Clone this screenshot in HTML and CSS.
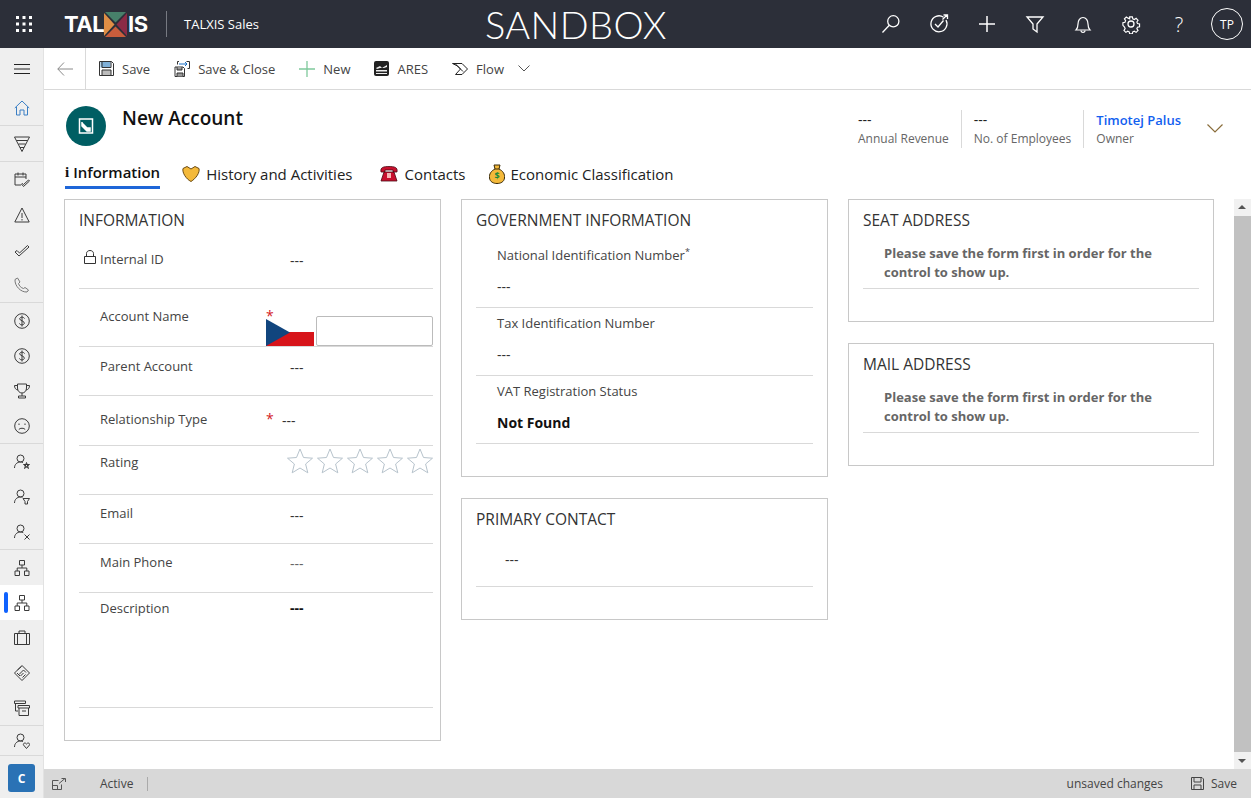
FILE: index.html
```html
<!DOCTYPE html>
<html lang="en">
<head>
    <meta charset="UTF-8">
    <title>New Account - TALXIS Sales</title>
    <link rel="stylesheet" href="styles.css">
</head>
<body>
    <!-- Top bar -->
    <header class="topbar">
        <button class="waffle" aria-label="Apps">
            <svg width="16" height="16" viewBox="0 0 16 16" fill="#fff"><rect x="0" y="0" width="3" height="3"/><rect x="6.5" y="0" width="3" height="3"/><rect x="13" y="0" width="3" height="3"/><rect x="0" y="6.5" width="3" height="3"/><rect x="6.5" y="6.5" width="3" height="3"/><rect x="13" y="6.5" width="3" height="3"/><rect x="0" y="13" width="3" height="3"/><rect x="6.5" y="13" width="3" height="3"/><rect x="13" y="13" width="3" height="3"/></svg>
        </button>
        <div class="logo">
            <span>TAL</span>
            <svg width="23" height="25" viewBox="0 0 23 25"><polygon points="1,0 22,0 11.5,10.5" fill="#47806a"/><polygon points="0,1 0,24 10.5,12.5" fill="#e08e45"/><polygon points="1,25 22,25 11.5,14.5" fill="#c85d3c"/><polygon points="23,1 23,24 12.5,12.5" fill="#8b2b46"/></svg>
            <span>IS</span>
        </div>
        <div class="app-name">TALXIS Sales</div>
        <div class="env">SANDBOX</div>
        <nav class="top-icons">
            <a><svg width="20" height="20" viewBox="0 0 20 20" fill="none" stroke="#fff" stroke-width="1.3"><circle cx="12.3" cy="7.3" r="5.6"/><path d="M8.3 11.3 1.5 18.5"/></svg></a>
            <a><svg width="20" height="20" viewBox="0 0 20 20" fill="none" stroke="#fff" stroke-width="1.3"><path d="M14.5 3.2A8 8 0 1 0 17 6"/><path d="M6 10l3 3 5.500-6.500"/><path d="M13.500 5.500 18 1M14.500 1H18.500V5"/></svg></a>
            <a><svg width="20" height="20" viewBox="0 0 20 20" fill="none" stroke="#fff" stroke-width="1.500"><path d="M10 2v16M2 10h16"/></svg></a>
            <a><svg width="20" height="20" viewBox="0 0 20 20" fill="none" stroke="#fff" stroke-width="1.300"><path d="M2 3h16l-6 7v8l-4-3v-5z"/></svg></a>
            <a><svg width="20" height="20" viewBox="0 0 20 20" fill="none" stroke="#fff" stroke-width="1.200"><path d="M3 16c1.500-1.500 2-3 2-6 0-3.500 2-6.500 5-6.500s5 3 5 6.500c0 3 .5 4.500 2 6z"/><path d="M8 16.500c0 2.500 4 2.500 4 0"/></svg></a>
            <a><svg width="20" height="20" viewBox="0 0 20 20" fill="none" stroke="#fff" stroke-width="1.300"><circle cx="10" cy="10" r="3"/><path d="M8.500 2h3l.5 2.300 1.700.7 2-1.300 2.100 2.100-1.300 2 .7 1.700 2.300.5v3l-2.300.5-.7 1.700 1.300 2-2.100 2.100-2-1.300-1.700.7-.5 2.300h-3l-.5-2.300-1.700-.7-2 1.300-2.100-2.100 1.300-2-.7-1.700L1 11.500v-3l2.300-.5.7-1.700-1.300-2 2.100-2.100 2 1.300L8.500 4.300z" transform="translate(1 1) scale(.9)"/></svg></a>
            <a class="help">?</a>
        </nav>
        <div class="avatar">TP</div>
    </header>

    <div class="shell">
        <!-- Left navigation -->
        <aside class="sidenav">
            <div class="nav-toggle">
                <svg width="16" height="12" viewBox="0 0 16 12" stroke="#222" stroke-width="1"><path d="M0 1.500h16M0 6h16M0 10.500h16"/></svg>
            </div>
            <div class="nav-group">
                <a class="nav-item"><svg viewBox="0 0 16 16"><path d="M.8 8 8 1l7.200 7M2.500 7v8h3.500v-5h4v5h3.500V7" stroke="#3b7fc4"/></svg></a>
            </div>
            <div class="nav-group">
                <a class="nav-item"><svg viewBox="0 0 16 16"><path d="M.5 1h15L8 15.500zM2.500 4.500h11M4.500 8h7M6 11.500h4"/></svg></a>
            </div>
            <div class="nav-group">
                <a class="nav-item"><svg viewBox="0 0 16 16"><path d="M7 13H1V2h11v5M1 5h11M4 .5v3M9 .5v3M7.500 12l2 2.500 6-5.500-1-1-5 4.500-1-1z"/></svg></a>
                <a class="nav-item"><svg viewBox="0 0 16 16"><path d="M8 1 .8 15h14.400zM8 6v5M8 12v1.500"/></svg></a>
                <a class="nav-item"><svg viewBox="0 0 16 16"><path d="M1 10l4 4L15 5l-1.500-1.500L5.500 11 3 8.500z"/></svg></a>
                <a class="nav-item"><svg viewBox="0 0 16 16"><path d="M1 2.500 3.500 1 6 5 4.500 6.500c.5 2 2.500 4.500 5 5l1.500-1 3.500 2.500-1.500 2C7 15.500 .5 9 1 2.500z" stroke="#777"/></svg></a>
            </div>
            <div class="nav-group">
                <a class="nav-item"><svg viewBox="0 0 16 16"><circle cx="8" cy="8" r="7.300"/><path d="M10.500 5.500C10 4 6 3.500 5.700 5.700 5.500 8 10.500 7.500 10.300 10.200 10 12.500 6 12.300 5.500 10.500M8 2.500v11"/></svg></a>
                <a class="nav-item"><svg viewBox="0 0 16 16"><circle cx="8" cy="8" r="7.300"/><path d="M10.500 5.500C10 4 6 3.500 5.700 5.700 5.500 8 10.500 7.500 10.300 10.200 10 12.500 6 12.300 5.500 10.500M8 2.500v11"/></svg></a>
                <a class="nav-item"><svg viewBox="0 0 16 16"><path d="M3.500 1h9v4c0 3-2 5-4.500 5S3.500 8 3.500 5zM3.500 2.500H.5C.5 5 1.500 6.500 4 7M12.500 2.500h3c0 2.500-1 4-3.500 4.500M8 10v3M4.500 13h7v2h-7z"/></svg></a>
                <a class="nav-item"><svg viewBox="0 0 16 16"><circle cx="8" cy="8" r="7.300"/><path d="M4.800 11.500C6 9.800 10 9.800 11.200 11.500M5 5.500v1.500M11 5.500v1.500"/></svg></a>
            </div>
            <div class="nav-group">
                <a class="nav-item"><svg viewBox="0 0 16 16"><circle cx="6.500" cy="4.500" r="3.500"/><path d="M.5 14c0-3.500 2.500-6 6-6 1 0 1.500.2 2.500.5M9.500 10.500h6l-5 4 2-6 2 6z"/></svg></a>
                <a class="nav-item"><svg viewBox="0 0 16 16"><circle cx="6.500" cy="4.500" r="3.500"/><path d="M.5 14c0-3.500 2.500-6 6-6 .8 0 1.500.1 2 .3M9 9.500h6.500l-2 3v2.500h-2.500v-2.500z"/></svg></a>
                <a class="nav-item"><svg viewBox="0 0 16 16"><circle cx="6.500" cy="4.500" r="3.500"/><path d="M.5 14c0-3.500 2.500-6 6-6 1 0 2 .2 2.800.7M10.500 10.500l5 5M15.500 10.500l-5 5"/></svg></a>
            </div>
            <div class="nav-group">
                <a class="nav-item"><svg viewBox="0 0 16 16"><path d="M5.500.5h5v4.500h-5zM1 11h4.500v4.500H1zM10.500 11H15v4.500h-4.500zM8 5v3M3.200 11V8h9.600v3"/></svg></a>
                <a class="nav-item current"><svg viewBox="0 0 16 16"><path d="M5.500.5h5v4.500h-5zM1 11h4.500v4.500H1zM10.500 11H15v4.500h-4.500zM8 5v3M3.200 11V8h9.600v3"/></svg></a>
                <a class="nav-item"><svg viewBox="0 0 16 16"><path d="M.5 3.500h15v11H.5zM5 3.500V1h6v2.500M3.500 3.500v11M12.500 3.500v11"/></svg></a>
                <a class="nav-item"><svg viewBox="0 0 16 16"><path d="M8 .5 15.500 8 8 15.500.5 8zM3.500 5l4-3.500M5 9.500 9.500 5 12 7.500M6.500 11l3-3M8.500 12.500l3-3M3 8l3 3"/></svg></a>
                <a class="nav-item"><svg viewBox="0 0 16 16"><path d="M.5 1h11v2.500H.5zM1.500 3.500V11h2.500M4 5.500h11.500v2.500H4zM5 8v7.500h9.500V8M8 11h4"/></svg></a>
            </div>
            <div class="nav-group short">
                <a class="nav-item"><svg viewBox="0 0 16 16"><circle cx="6.500" cy="4.500" r="3.500"/><path d="M.5 14c0-3.500 2.500-6 6-6 1 0 2 .2 2.500.5M12.500 15.500 9.500 12c-.8-1.500 1.500-3 3-1 1.500-2 3.800-.5 3 1z"/></svg></a>
            </div>
            <div class="area-switch">C</div>
        </aside>

        <div class="workspace">
            <!-- Command bar -->
            <div class="commandbar">
                <button class="back" aria-label="Back">
                    <svg width="16" height="14" viewBox="0 0 16 14" fill="none" stroke="#8a8a8a"><path d="M7 .5.800 7 7 13.500M.800 7H16"/></svg>
                </button>
                <button class="cmd"><svg width="15" height="15" viewBox="0 0 15 15"><path d="M.5.500h12l2 2v12H.5z" fill="#fff" stroke="#333"/><path d="M1.500 1h10v5.500h-10z" fill="#7fb0d8"/><path d="M3 9h9v5.500H3z" fill="#bbb" stroke="#333"/><path d="M3 .5v6h9v-6" fill="none" stroke="#333"/></svg><span>Save</span></button>
                <button class="cmd"><svg width="16" height="16" viewBox="0 0 16 16" fill="none" stroke="#333"><path d="M1 6h8l1.500 1.500v8H1z"/><path d="M3 6v3h5V6M3 15.500v-3.500h6v3.500" fill="#999"/><path d="M5 .5H3.500v3M12.500.5H15.500v7h-2"/><path d="M5 3h8M11 1l2 2-2 2" stroke="#1a6fc4"/></svg><span>Save &amp; Close</span></button>
                <button class="cmd"><svg width="16" height="16" viewBox="0 0 16 16" stroke="#7fc99c" stroke-width="1.300"><path d="M8 0v16M0 8h16"/></svg><span>New</span></button>
                <button class="cmd"><svg width="15" height="15" viewBox="0 0 15 15"><rect width="15" height="15" rx="2" fill="#222"/><path d="M2 7l4-2 2 2 5-3v2l-3 1H6L3 8zM2 9h11v1.500H2zM2 12h11v1H2z" fill="#eee"/></svg><span>ARES</span></button>
                <button class="cmd"><svg width="16" height="14" viewBox="0 0 16 14" fill="none" stroke="#222"><path d="M.5 1.500H10L15.500 7 10 12.500H3.500L8.500 7 5.500 4zM3 1.500 11 9.500"/></svg><span>Flow</span></button>
                <button class="more" aria-label="More commands"><svg width="12" height="7" viewBox="0 0 12 7" fill="none" stroke="#555"><path d="M.5.500 6 6l5.500-5.500"/></svg></button>
            </div>

            <main class="record">
                <!-- Record header -->
                <div class="record-head">
                    <div class="entity-icon">
                        <svg width="16" height="16" viewBox="0 0 16 16" fill="none" stroke="#fff" stroke-width="1.500"><path d="M1.500 1H14.500V15H1.500z"/><path d="M4 4v4l5 5H12V10L9 10 4 5" fill="#fff"/></svg>
                    </div>
                    <h1>New Account</h1>
                    <div class="head-fields">
                        <div class="head-field"><b>---</b><span>Annual Revenue</span></div>
                        <div class="head-field"><b>---</b><span>No. of Employees</span></div>
                        <div class="head-field"><a>Timotej Palus</a><span>Owner</span></div>
                    </div>
                    <svg class="head-chevron" width="16" height="9" viewBox="0 0 16 9" fill="none" stroke="#8a6d3b" stroke-width="1.200"><path d="M.5.500 8 8l7.500-7.500"/></svg>
                </div>

                <!-- Tabs -->
                <div class="tabs">
                    <a class="tab active"><span class="tab-i">i</span>Information</a>
                    <a class="tab tab-history"><svg width="18" height="16" viewBox="0 0 18 16"><path d="M1 2.500 5 .5 9 3l4-2.500 4 2c1 4-3 10-8 13C4 13 0 6.500 1 2.500z" fill="#f4b93a" stroke="#6b4a10"/></svg>History and Activities</a>
                    <a class="tab tab-contacts"><svg width="18" height="16" viewBox="0 0 18 16"><path d="M1 6C0 1 4 .5 9 .5s9 .5 8 5.500h-4V4H5v2zM4 6h10l3 9H1z" fill="#c8102e" stroke="#4a0a14" stroke-width=".8"/><rect x="7" y="7" width="4" height="5" fill="#f6b6b6"/></svg>Contacts</a>
                    <a class="tab tab-economic"><svg width="16" height="20" viewBox="0 0 16 20"><path d="M5 1h6L10 5c4 2 6 5 5.500 9-.500 4-4 5.500-7.500 5.500S1 18 .500 14C0 10 2 7 6 5z" fill="#f4b93a" stroke="#3a2a08"/><path d="M6 5h4" stroke="#3a2a08"/><text x="8" y="15" font-size="9" font-weight="700" text-anchor="middle" fill="#1a8a3c">$</text></svg>Economic Classification</a>
                </div>

                <div class="form-scroll">
                    <div class="form">
                        <section class="card card-info">
                            <h2>INFORMATION</h2>
                            <div class="info-rows">
                                <div class="row row-id">
                                    <label><svg class="lock" width="12" height="14" viewBox="0 0 12 14" fill="none" stroke="#333"><path d="M.5 6.500h11v7H.5zM2.500 6.500V3.500c0-4 7-4 7 0v3"/></svg>Internal ID</label><i></i><div class="val pad">---</div>
                                </div>
                                <div class="row row-name">
                                    <label>Account Name</label><i class="req">*</i>
                                    <div class="name-input">
                                        <svg width="48" height="27" viewBox="0 0 48 27"><rect width="48" height="13" fill="#fff"/><rect y="13" width="48" height="14" fill="#d7141a"/><path d="M0 0 24 13.500 0 27z" fill="#11457e"/></svg>
                                        <input type="text">
                                    </div>
                                </div>
                                <div class="row row-parent"><label>Parent Account</label><i></i><div class="val pad">---</div></div>
                                <div class="row row-rel"><label>Relationship Type</label><i class="req">*</i><div class="val">---</div></div>
                                <div class="row row-rating">
                                    <label>Rating</label><i></i>
                                    <div class="stars">
                                        <svg viewBox="0 0 26 26"><path d="M13 1l3.500 8.500 9 .7-6.900 5.800 2.200 8.800L13 20l-7.800 4.800 2.200-8.800L.500 10.200l9-.7z"/></svg>
                                        <svg viewBox="0 0 26 26"><path d="M13 1l3.500 8.500 9 .7-6.900 5.800 2.200 8.800L13 20l-7.800 4.800 2.200-8.800L.500 10.200l9-.7z"/></svg>
                                        <svg viewBox="0 0 26 26"><path d="M13 1l3.500 8.500 9 .7-6.900 5.800 2.200 8.800L13 20l-7.800 4.800 2.200-8.800L.500 10.200l9-.7z"/></svg>
                                        <svg viewBox="0 0 26 26"><path d="M13 1l3.500 8.500 9 .7-6.900 5.800 2.200 8.800L13 20l-7.800 4.800 2.200-8.800L.500 10.200l9-.7z"/></svg>
                                        <svg viewBox="0 0 26 26"><path d="M13 1l3.500 8.500 9 .7-6.900 5.800 2.200 8.800L13 20l-7.800 4.800 2.200-8.800L.500 10.200l9-.7z"/></svg>
                                    </div>
                                </div>
                                <div class="row row-email"><label>Email</label><i></i><div class="val pad">---</div></div>
                                <div class="row row-phone"><label>Main Phone</label><i></i><div class="val pad muted">---</div></div>
                                <div class="row row-desc"><label>Description</label><i></i><div class="val pad strong">---</div></div>
                            </div>
                        </section>

                        <div class="col">
                            <section class="card card-gov">
                                <h2>GOVERNMENT INFORMATION</h2>
                                <div class="stack-field stack-first"><label>National Identification Number<sup>*</sup></label><div class="val">---</div></div>
                                <div class="stack-field"><label>Tax Identification Number</label><div class="val">---</div></div>
                                <div class="stack-field"><label>VAT Registration Status</label><div class="val strong">Not Found</div></div>
                            </section>
                            <section class="card card-contact">
                                <h2>PRIMARY CONTACT</h2>
                                <div class="contact-val"><div class="val">---</div></div>
                            </section>
                        </div>

                        <div class="col">
                            <section class="card card-addr">
                                <h2>SEAT ADDRESS</h2>
                                <p class="notice">Please save the form first in order for the control to show up.</p>
                            </section>
                            <section class="card card-addr">
                                <h2>MAIL ADDRESS</h2>
                                <p class="notice">Please save the form first in order for the control to show up.</p>
                            </section>
                        </div>
                    </div>

                    <div class="scrollbar">
                        <span class="arrow up"></span>
                        <span class="thumb"></span>
                        <span class="arrow down"></span>
                    </div>
                </div>
            </main>

            <!-- Status bar -->
            <footer class="statusbar">
                <svg width="14" height="12" viewBox="0 0 14 12" fill="none" stroke="#555"><path d="M.5 2.500h6M.5 2.500v9h9v-5M.5 7.500h5v4M7 5.500 13 .5M9.500.500H13.500V4" /></svg>
                <span class="status-text">Active</span>
                <span class="status-sep"></span>
                <span class="unsaved">unsaved changes</span>
                <svg width="13" height="13" viewBox="0 0 13 13" fill="none" stroke="#444"><path d="M.5.500h10.500l1.500 1.500v10.500H.5zM3 .5V5h7V.5M3 12.500V8h7v4.500"/></svg>
                <span class="status-save">Save</span>
            </footer>
        </div>
    </div>
</body>
</html>
```

FILE: styles.css
```css
/* Global */
* {
    box-sizing: border-box;
}

html, body {
    margin: 0;
    height: 100%;
    overflow: hidden;
}

body {
    display: flex;
    flex-direction: column;
    font-family: "Open Sans", "Noto Sans", Arial, sans-serif;
    font-size: 13px;
    color: #333;
    background: #fff;
}

button {
    font: inherit;
    color: inherit;
    background: none;
    border: 0;
    padding: 0;
}

/* Top bar */
.topbar {
    display: flex;
    align-items: center;
    height: 48px;
    flex: none;
    background: #2c2f39;
    color: #fff;
}

.waffle {
    display: flex;
    align-items: center;
    justify-content: center;
    width: 48px;
    height: 48px;
}

.logo {
    display: flex;
    align-items: center;
    width: 103px;
    margin-left: 16px;
    height: 26px;
    font-family: Inter, Roboto, sans-serif;
    font-size: 22px;
    font-weight: 700;
    letter-spacing: -.5px;
    border-right: 1px solid #777a82;
}

.logo svg {
    margin: 0 1px 0 0;
}

.app-name {
    margin-left: 17px;
    font-size: 13px;
}

.env {
    margin-left: 226px;
    font-family: Lato, sans-serif;
    font-weight: 300;
    font-size: 38px;
    letter-spacing: .4px;
}

.top-icons {
    display: flex;
    margin-left: auto;
}

.top-icons a {
    display: flex;
    align-items: center;
    justify-content: center;
    width: 48px;
    height: 48px;
}

.help {
    font-size: 20px;
    font-weight: 300;
}

.avatar {
    display: flex;
    align-items: center;
    justify-content: center;
    width: 32px;
    height: 32px;
    margin: 0 8px 0 8px;
    border: 1px solid #fff;
    border-radius: 50%;
    font-size: 12px;
}

/* Shell */
.shell {
    display: flex;
    flex: 1;
    min-height: 0;
}

/* Left navigation */
.sidenav {
    width: 44px;
    flex: none;
    background: #efefef;
    border-right: 1px solid #e2e2e2;
}

.nav-toggle {
    display: flex;
    align-items: center;
    justify-content: center;
    height: 42px;
}

.nav-group {
    border-bottom: 1px solid #d9d9d9;
}

.nav-item {
    display: flex;
    align-items: center;
    justify-content: center;
    position: relative;
    height: 35px;
}

.nav-group:first-of-type .nav-item {
    height: 35px;
}

.nav-item svg {
    width: 16px;
    height: 16px;
    fill: none;
    stroke: #3a3a3a;
}

.nav-item.current {
    background: #fff;
}

.nav-item.current::before {
    content: "";
    position: absolute;
    left: 4px;
    top: 7px;
    width: 4px;
    height: 21px;
    border-radius: 2px;
    background: #0f62fe;
}

.nav-group.short .nav-item {
    height: 29px;
}

.area-switch {
    display: flex;
    align-items: center;
    justify-content: center;
    width: 27px;
    height: 28px;
    margin: 8px 0 0 8px;
    border-radius: 3px;
    background: #2a72b5;
    color: #fff;
    font-size: 12px;
    font-weight: 700;
}

/* Workspace */
.workspace {
    display: flex;
    flex-direction: column;
    flex: 1;
    min-width: 0;
}

/* Command bar */
.commandbar {
    display: flex;
    align-items: center;
    height: 42px;
    flex: none;
    border-bottom: 1px solid #d9d9d9;
}

.back {
    display: flex;
    align-items: center;
    justify-content: center;
    width: 42px;
    height: 41px;
    border-right: 1px solid #d9d9d9;
}

.cmd {
    display: flex;
    align-items: center;
    gap: 8px;
    margin-right: 24px;
    font-size: 13px;
    color: #444;
}

.commandbar .back + .cmd {
    margin-left: 13px;
}

.more {
    display: flex;
    margin-left: -10px;
}

/* Record header */
.record {
    display: flex;
    flex-direction: column;
    flex: 1;
    min-height: 0;
}

.record-head {
    display: flex;
    height: 68px;
    padding: 16px 0 0 22px;
    flex: none;
}

.entity-icon {
    display: flex;
    align-items: center;
    justify-content: center;
    width: 40px;
    height: 40px;
    border-radius: 50%;
    background: #005e63;
}

h1 {
    margin: -1px 0 0 16px;
    font-size: 19px;
    font-weight: 600;
    color: #111;
}

.head-fields {
    display: flex;
    margin-left: auto;
    height: 38px;
    margin-top: 4px;
}

.head-field {
    display: flex;
    flex-direction: column;
    padding: 0 12px;
    border-left: 1px solid #d9d9d9;
    font-size: 12px;
    color: #666;
}

.head-field:first-child {
    border-left: 0;
}

.head-field b {
    font-weight: 400;
    font-size: 14px;
    line-height: 20px;
    color: #222;
}

.head-field a {
    font-weight: 600;
    font-size: 13px;
    line-height: 20px;
    color: #1160f0;
}

.head-chevron {
    margin: 18px 28px 0 14px;
}

/* Tabs */
.tabs {
    display: flex;
    height: 41px;
    padding-left: 21px;
    flex: none;
}

.tab {
    display: flex;
    align-items: center;
    gap: 6px;
    height: 31px;
    font-size: 15px;
    color: #222;
}

.tab.active {
    gap: 4px;
    font-weight: 600;
    border-bottom: 3px solid #1e66d8;
    color: #111;
}

.tab-i {
    font-family: "Liberation Serif", serif;
    font-weight: 700;
}

.tab-history {
    margin-left: 22px;
}

.tab-contacts {
    margin-left: 28px;
}

.tab-economic {
    margin-left: 23px;
}

/* Form area */
.form-scroll {
    display: flex;
    flex: 1;
    min-height: 0;
    padding-left: 20px;
}

.form {
    display: grid;
    grid-template-columns: 377px 367px 366px;
    column-gap: 20px;
    align-items: start;
    flex: none;
    width: 1150px;
}

.col {
    display: flex;
    flex-direction: column;
    gap: 21px;
}

.card {
    border: 1px solid #c8c8c8;
    padding: 0 14px;
}

.card h2 {
    margin: 0;
    height: 40px;
    padding-top: 9px;
    font-size: 15.500px;
    font-weight: 400;
    line-height: 22px;
    color: #333;
}

label {
    color: #444;
}

.val {
    color: #333;
    font-size: 14px;
}

.val.pad {
    padding-left: 8px;
}

.val.muted {
    color: #666;
}

.val.strong {
    font-weight: 700;
    color: #111;
}

/* Information card */
.card-info {
    height: 542px;
}

.info-rows {
    display: grid;
    grid-template-rows: 49px 58px 49px 50px 49px 49px 49px 115px;
}

.row {
    display: grid;
    grid-template-columns: 166px 16px 1fr;
    padding-left: 21px;
    border-bottom: 1px solid #d9d9d9;
    line-height: 20px;
    position: relative;
}

.row i {
    font-style: normal;
}

.row .req {
    color: #d3221f;
    font-size: 14px;
}

.lock {
    position: absolute;
    left: 5px;
    top: 10px;
}

.row-id { padding-top: 9px; }
.row-id .val { padding-top: 2px; }
.row-name { padding-top: 17px; }
.row-parent { padding-top: 9px; }
.row-parent .val { padding-top: 2px; }
.row-rel { padding-top: 13px; }
.row-rel .val { padding-top: 2px; }
.row-rating { padding-top: 6px; }
.row-email { padding-top: 8px; }
.row-email .val { padding-top: 3px; }
.row-phone { padding-top: 8px; }
.row-phone .val { padding-top: 2px; }
.row-desc { padding-top: 5px; }

.name-input {
    display: flex;
    align-items: flex-end;
    gap: 2px;
    margin: -2px 0 0 -16px;
}

.name-input input {
    flex: 1;
    min-width: 0;
    width: 115px;
    height: 30px;
    border: 1px solid #bbb;
    border-radius: 2px;
}

.stars {
    display: flex;
    gap: 4px;
    margin: -4px 0 0 5px;
}

.stars svg {
    width: 26px;
    height: 26px;
    fill: none;
    stroke: #b7c3cc;
}

/* Government card */
.card-gov {
    height: 278px;
}

.stack-field {
    height: 68px;
    padding: 5px 0 0 21px;
    border-bottom: 1px solid #d9d9d9;
    line-height: 20px;
}

.stack-first {
    height: 68px;
}

.stack-field .val {
    margin-top: 12px;
}

.stack-field sup {
    font-size: 9px;
    line-height: 0;
}

/* Primary contact */
.card-contact {
    height: 122px;
}

.contact-val {
    height: 48px;
    padding: 11px 0 0 29px;
    border-bottom: 1px solid #d9d9d9;
}

/* Address cards */
.card-addr {
    height: 123px;
}

.notice {
    margin: 0;
    height: 49px;
    padding: 4px 0 0 21px;
    font-size: 13px;
    font-weight: 700;
    line-height: 19px;
    color: #666;
    border-bottom: 1px solid #d9d9d9;
}

/* Scrollbar */
.scrollbar {
    display: flex;
    flex-direction: column;
    margin-left: 20px;
    width: 17px;
    background: #f1f1f1;
}

.thumb {
    flex: 1;
    background: #c1c1c1;
}

.arrow {
    height: 17px;
    position: relative;
}

.arrow::after {
    content: "";
    position: absolute;
    left: 4px;
    border-left: 4px solid transparent;
    border-right: 4px solid transparent;
}

.arrow.up::after {
    top: 6px;
    border-bottom: 4px solid #555;
}

.arrow.down::after {
    top: 7px;
    border-top: 4px solid #555;
}

/* Status bar */
.statusbar {
    display: flex;
    align-items: center;
    height: 29px;
    flex: none;
    padding-left: 8px;
    background: #d8d8d8;
    font-size: 12px;
    color: #444;
}

.status-text {
    margin-left: 34px;
}

.status-sep {
    width: 1px;
    height: 14px;
    margin-left: 14px;
    background: #aaa;
}

.unsaved {
    margin-left: auto;
    margin-right: 28px;
}

.status-save {
    margin: 0 14px 0 7px;
}
```
